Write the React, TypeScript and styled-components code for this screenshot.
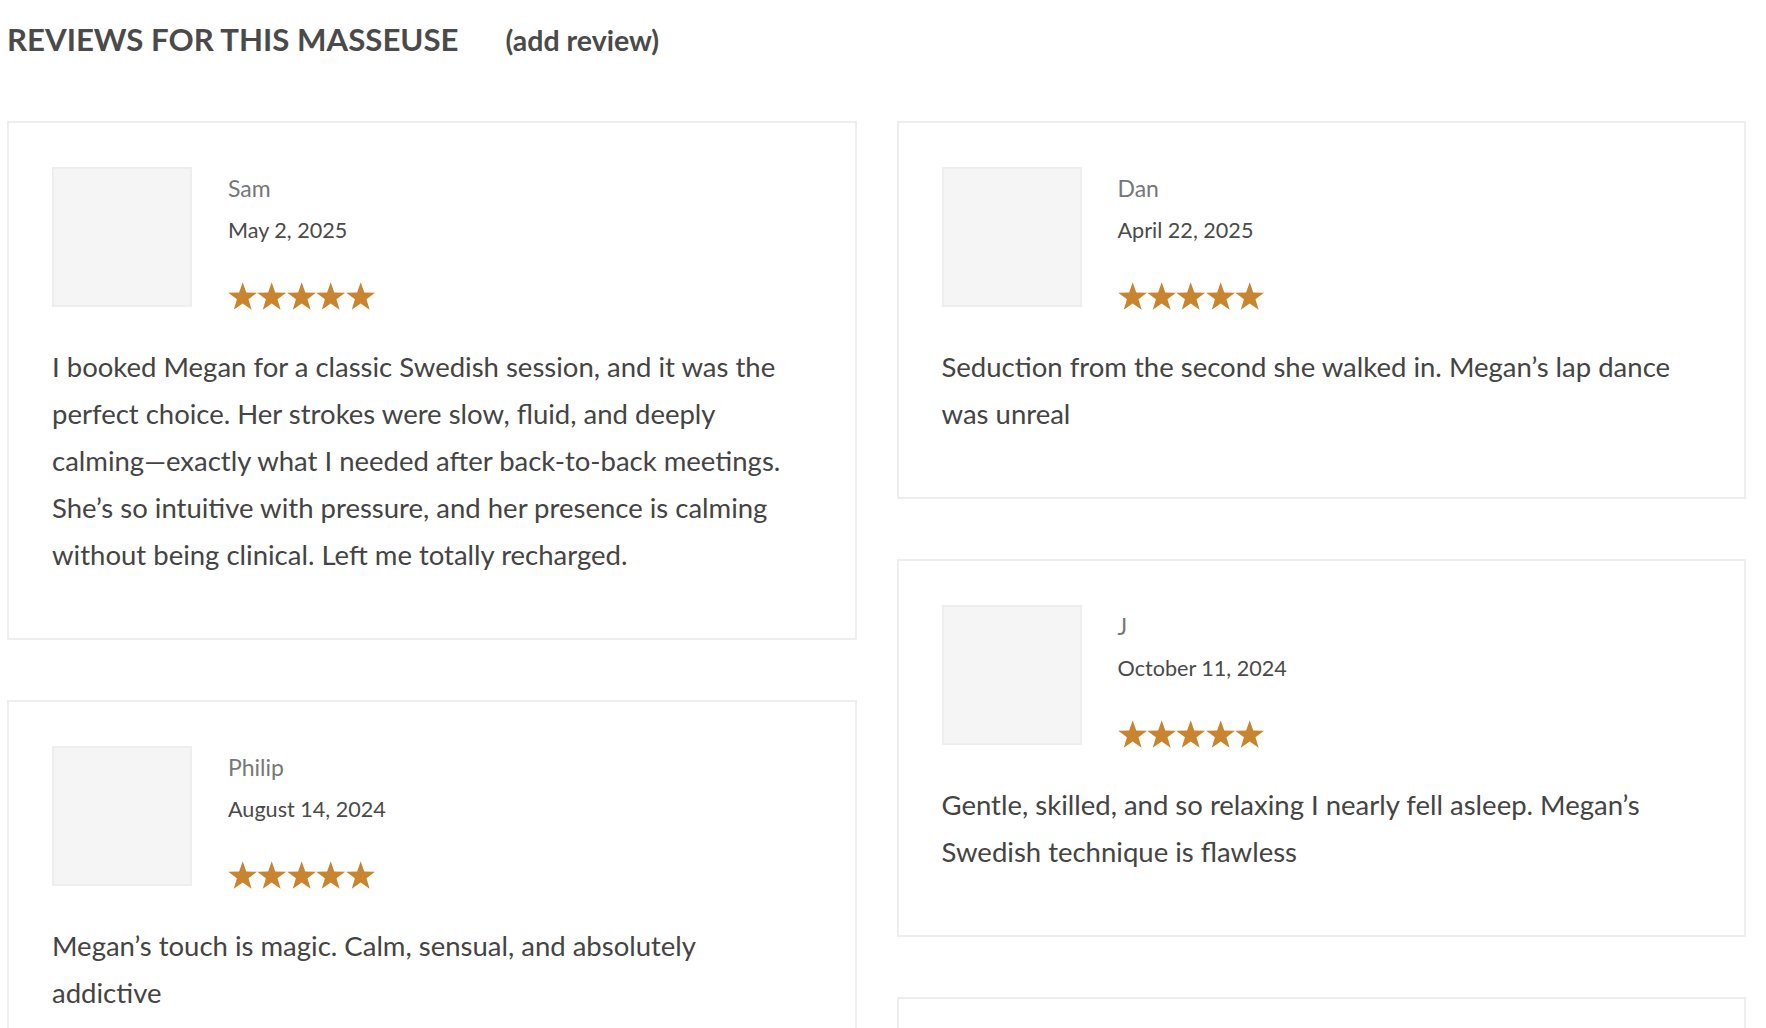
import React from "react";
import styled, { createGlobalStyle } from "styled-components";

const GlobalStyle = createGlobalStyle`
  html, body { margin: 0; padding: 0; background: #ffffff; }
  body { font-family: Lato, "Open Sans", "Liberation Sans", sans-serif; color: #444; }
`;

const Page = styled.div`
  width: 1739px;
  padding: 20px 0 0 7px;
`;

const HeaderRow = styled.div`
  display: flex;
  align-items: baseline;
  gap: 47px;
  margin-bottom: 63px;
`;

const Title = styled.h2`
  margin: 0;
  font-size: 31.2px;
  line-height: 38px;
  font-weight: 700;
  color: #4a4a4a;
  text-transform: uppercase;
`;

const AddLink = styled.a`
  font-size: 28.5px;
  font-weight: 700;
  color: #4a4a4a;
  text-decoration: none;
  cursor: pointer;
`;

const Columns = styled.div`
  display: grid;
  grid-template-columns: 1fr 1fr;
  column-gap: 40px;
  align-items: start;
`;

const Column = styled.div`
  display: flex;
  flex-direction: column;
  gap: 60px;
`;

const Card = styled.div`
  border: 2px solid #eeeeee;
  padding: 44px 43px 60px;
  background: #fff;
`;

const CardHead = styled.div`
  display: flex;
  gap: 36px;
  align-items: flex-start;
`;

const Avatar = styled.div`
  width: 140px;
  height: 140px;
  box-sizing: border-box;
  border: 2px solid #eeeeee;
  background: #f5f5f5;
  flex: none;
`;

const Meta = styled.div`
  display: flex;
  flex-direction: column;
`;

const Name = styled.div`
  font-size: 23px;
  line-height: 42px;
  color: #777;
`;

const DateText = styled.div`
  font-size: 21.6px;
  line-height: 42px;
  color: #4a4a4a;
`;

const Stars = styled.div`
  display: flex;
  margin-top: 31px;
`;

const StarSvg = styled.svg`
  width: 29.4px;
  height: 28px;
  display: block;
  fill: #c9842f;
`;

const Body = styled.p`
  margin: 33px 0 0;
  font-size: 27.5px;
  line-height: 47px;
  color: #444;
`;

const starPoints = (() => {
  const cx = 14.7;
  const cy = 15.4;
  const R = 15.2;
  const r = R * 0.4;
  const pts: string[] = [];
  for (let i = 0; i < 10; i++) {
    const rad = i % 2 === 0 ? R : r;
    const a = (Math.PI / 5) * i - Math.PI / 2;
    pts.push(`${(cx + rad * Math.cos(a)).toFixed(2)},${(cy + rad * Math.sin(a)).toFixed(2)}`);
  }
  return pts.join(" ");
})();

const Star = () => (
  <StarSvg viewBox="0 0 29.4 28">
    <polygon points={starPoints} />
  </StarSvg>
);

type Review = { name: string; date: string; text: string };

const ReviewCard = ({ review }: { review: Review }) => (
  <Card>
    <CardHead>
      <Avatar />
      <Meta>
        <Name>{review.name}</Name>
        <DateText>{review.date}</DateText>
        <Stars>
          {[0, 1, 2, 3, 4].map((i) => (
            <Star key={i} />
          ))}
        </Stars>
      </Meta>
    </CardHead>
    <Body>{review.text}</Body>
  </Card>
);

const left: Review[] = [
  {
    name: "Sam",
    date: "May 2, 2025",
    text:
      "I booked Megan for a classic Swedish session, and it was the perfect choice. Her strokes were slow, fluid, and deeply calming\u2014exactly what I needed after back-to-back meetings. She\u2019s so intuitive with pressure, and her presence is calming without being clinical. Left me totally recharged.",
  },
  {
    name: "Philip",
    date: "August 14, 2024",
    text: "Megan\u2019s touch is magic. Calm, sensual, and absolutely addictive",
  },
];

const right: Review[] = [
  {
    name: "Dan",
    date: "April 22, 2025",
    text: "Seduction from the second she walked in. Megan\u2019s lap dance was unreal",
  },
  {
    name: "J",
    date: "October 11, 2024",
    text: "Gentle, skilled, and so relaxing I nearly fell asleep. Megan\u2019s Swedish technique is flawless",
  },
  {
    name: "Chris",
    date: "September 3, 2024",
    text: "Warm, attentive and incredibly relaxing. Highly recommended.",
  },
];

export default function App() {
  return (
    <>
      <GlobalStyle />
      <Page>
        <HeaderRow>
          <Title>Reviews for this masseuse</Title>
          <AddLink>(add review)</AddLink>
        </HeaderRow>
        <Columns>
          <Column>
            {left.map((r) => (
              <ReviewCard key={r.name} review={r} />
            ))}
          </Column>
          <Column>
            {right.map((r) => (
              <ReviewCard key={r.name} review={r} />
            ))}
          </Column>
        </Columns>
      </Page>
    </>
  );
}
